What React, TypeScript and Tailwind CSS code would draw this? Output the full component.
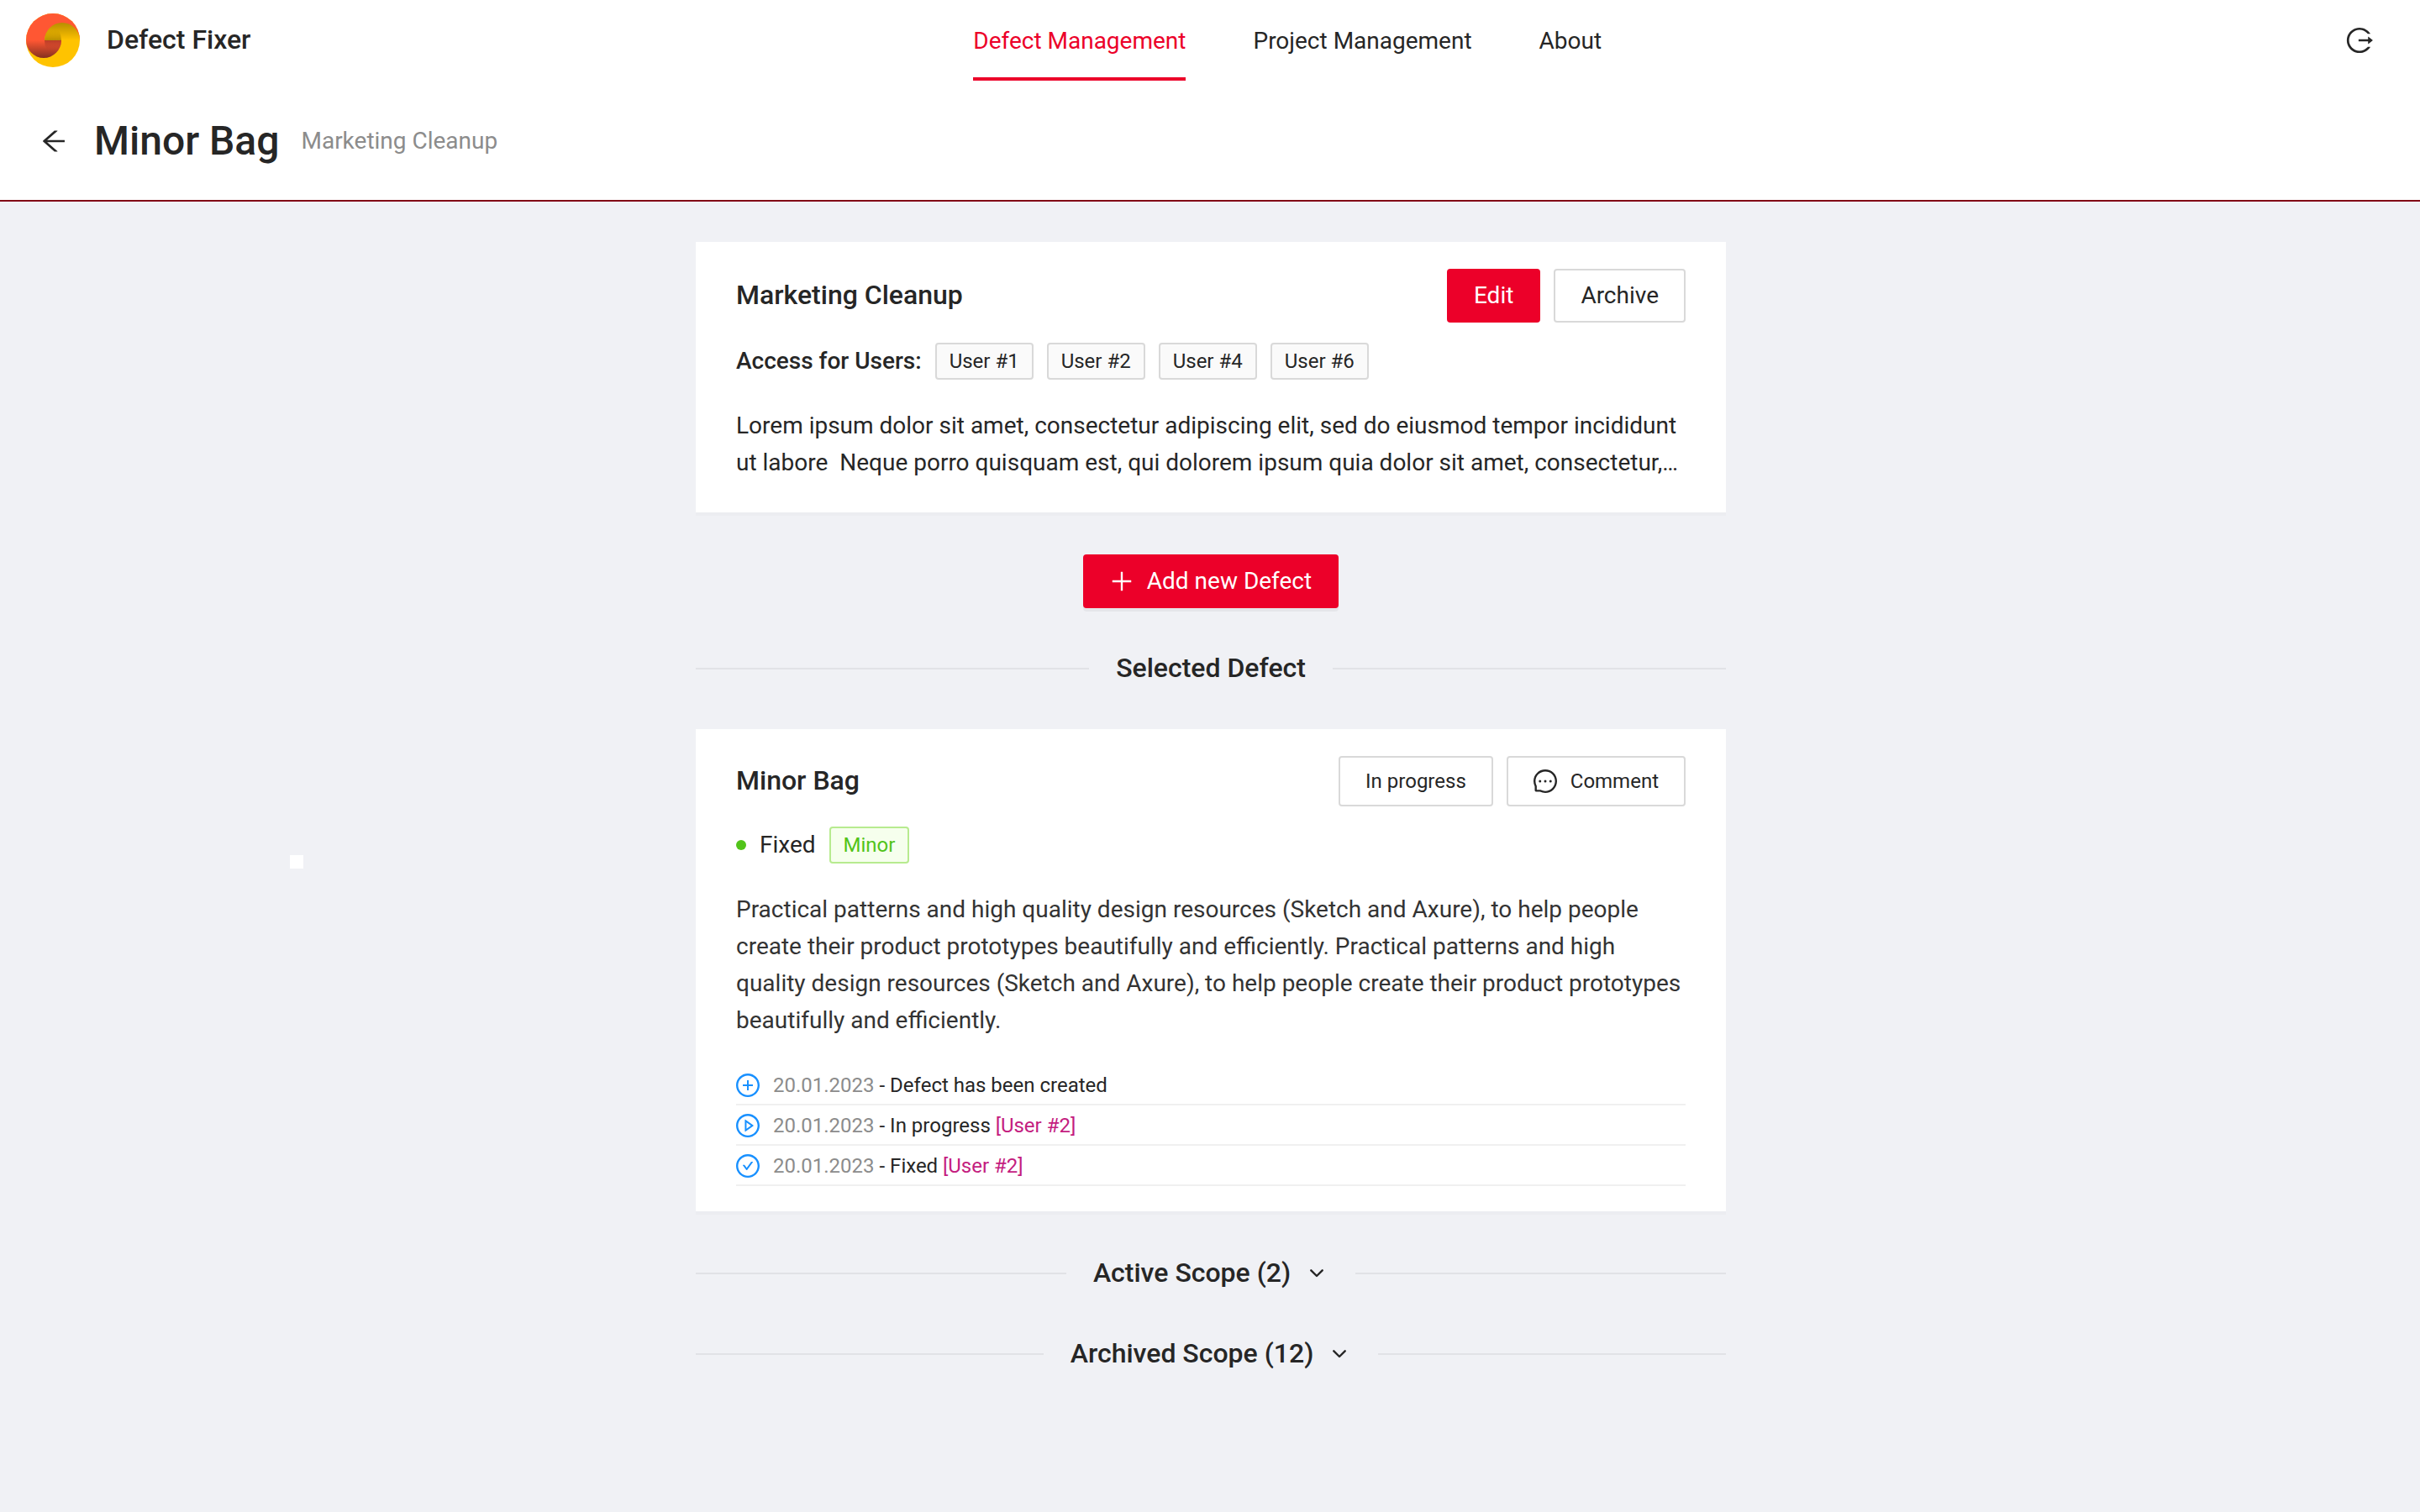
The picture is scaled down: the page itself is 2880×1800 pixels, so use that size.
import React from "react";
import {
  AiOutlineArrowLeft,
  AiOutlineCheckCircle,
  AiOutlineLogout,
  AiOutlineMessage,
  AiOutlinePlayCircle,
  AiOutlinePlus,
  AiOutlinePlusCircle,
} from "react-icons/ai";

const users = ["User #1", "User #2", "User #4", "User #6"];

const history = [
  { Icon: AiOutlinePlusCircle, date: "20.01.2023", text: "Defect has been created", user: "" },
  { Icon: AiOutlinePlayCircle, date: "20.01.2023", text: "In progress", user: "[User #2]" },
  { Icon: AiOutlineCheckCircle, date: "20.01.2023", text: "Fixed", user: "[User #2]" },
];

function Logo() {
  return (
    <svg viewBox="0 0 64 64" className="size-16 shrink-0" aria-hidden="true">
      <defs>
        <linearGradient id="gold" gradientUnits="userSpaceOnUse" x1="0" y1="11" x2="0" y2="32">
          <stop offset="0" stopColor="#b88d00" />
          <stop offset="1" stopColor="#ffc300" />
        </linearGradient>
        <linearGradient id="rust" gradientUnits="userSpaceOnUse" x1="0" y1="32" x2="0" y2="53">
          <stop offset="0" stopColor="#ff5733" />
          <stop offset="1" stopColor="#85301f" />
        </linearGradient>
        <linearGradient id="goldLens" gradientUnits="userSpaceOnUse" x1="0" y1="20" x2="0" y2="32">
          <stop offset="0" stopColor="#b88d00" stopOpacity="0" />
          <stop offset="1" stopColor="#b88d00" />
        </linearGradient>
        <linearGradient id="rustLens" gradientUnits="userSpaceOnUse" x1="0" y1="32" x2="0" y2="43">
          <stop offset="0" stopColor="#b83e28" />
          <stop offset="1" stopColor="#b83e28" stopOpacity="0" />
        </linearGradient>
      </defs>
      <circle cx="32" cy="32" r="32" fill="#ffc300" />
      <path d="M0 32a32 32 0 0 1 64 0z" fill="#ff5733" />
      <path d="M22 32a21 21 0 0 1 42 0z" fill="url(#gold)" />
      <path d="M0 32a21 21 0 0 0 42 0z" fill="url(#rust)" />
      <path d="M22 32A21 21 0 0 1 32 14.100A21 21 0 0 1 42 32z" fill="url(#goldLens)" />
      <path d="M42 32H22A21 21 0 0 0 32 49.900A21 21 0 0 0 42 32z" fill="url(#rustLens)" />
    </svg>
  );
}

function Divider({ children }: { children: React.ReactNode }) {
  return (
    <div className="flex items-center gap-8">
      <div className="h-0.5 flex-1 bg-black/6" />
      {children}
      <div className="h-0.5 flex-1 bg-black/6" />
    </div>
  );
}

function Scope({ label }: { label: string }) {
  return (
    <Divider>
      <button type="button" className="flex items-center gap-[23px] pr-1.5 text-[32px]/[46px] font-medium">
        <span className="pb-0.5">{label}</span>
        <svg
          viewBox="0 0 16 10"
          className="h-2.5 w-4"
          fill="none"
          stroke="currentColor"
          strokeWidth="2.4"
          strokeLinecap="round"
          strokeLinejoin="round"
          aria-hidden="true"
        >
          <path d="M1.300 1.300L8 8L14.700 1.300" />
        </svg>
      </button>
    </Divider>
  );
}

export default function App() {
  return (
    <div className="min-h-screen bg-[#f0f1f5] font-['Roboto',sans-serif] text-[28px]/11 text-[#262626]">
      <header className="border-b-2 border-[#820014] bg-white">
        <div className="flex h-24 items-center pl-[31px] pr-[54px]">
          <Logo />
          <span className="ml-8 pb-0.5 text-[32px]/[46px] font-medium">Defect Fixer</span>
          <nav className="flex h-full flex-1 justify-center gap-20">
            <a href="#defects" className="flex h-full items-center border-b-4 border-[#ec0029] pt-1.5 text-[#ec0029]">
              Defect Management
            </a>
            <a href="#projects" className="flex h-full items-center pt-0.5">
              Project Management
            </a>
            <a href="#about" className="flex h-full items-center pt-0.5">
              About
            </a>
          </nav>
          <button type="button" aria-label="Log out" className="ml-6">
            <AiOutlineLogout className="size-9" />
          </button>
        </div>
        <div className="flex h-[142px] items-center px-[46px] pt-0.5">
          <button type="button" aria-label="Back">
            <AiOutlineArrowLeft className="size-9" />
          </button>
          <h1 className="ml-[30px] text-5xl/16 font-medium">Minor Bag</h1>
          <span className="ml-[26px] text-[#8c8c8c]">Marketing Cleanup</span>
        </div>
      </header>

      <main className="mx-auto flex w-full max-w-[1228px] flex-col pt-12 pl-0.5">
        <section className="bg-white px-12 pt-8 pb-[37px] shadow-[0_4px_0_rgba(0,0,0,0.016)]">
          <div className="flex items-center gap-4">
            <h2 className="flex-1 pb-0.5 text-[32px]/[46px] font-medium">Marketing Cleanup</h2>
            <button type="button" className="h-16 rounded bg-[#ec0029] px-8 text-white">
              Edit
            </button>
            <button type="button" className="h-16 rounded border-2 border-[#d9d9d9] px-[30px]">
              Archive
            </button>
          </div>
          <div className="mt-6 flex items-center gap-4">
            <span className="font-medium">Access for Users:</span>
            {users.map((user) => (
              <span key={user} className="rounded border-2 border-[#d9d9d9] bg-[#fafafa] px-[15px] text-2xl/10">
                {user}
              </span>
            ))}
          </div>
          <p className="mt-[33px] whitespace-pre-wrap">
            Lorem ipsum dolor sit amet, consectetur adipiscing elit, sed do eiusmod tempor incididunt ut labore{"  "}
            Neque porro quisquam est, qui dolorem ipsum quia dolor sit amet, consectetur,…
          </p>
        </section>

        <button
          type="button"
          className="mt-[50px] flex h-16 items-center gap-3.5 self-center rounded bg-[#ec0029] pr-8 pl-[30px] text-white shadow-[0_4px_0_rgba(0,0,0,0.043)]"
        >
          <AiOutlinePlus className="size-8" />
          Add new Defect
        </button>

        <div className="mt-12">
          <Divider>
            <h2 className="pb-0.5 text-[32px]/[46px] font-medium">Selected Defect</h2>
          </Divider>
        </div>

        <section className="mt-12 bg-white px-12 pt-8 pb-[30px] shadow-[0_4px_0_rgba(0,0,0,0.016)]">
          <div className="flex items-center gap-4">
            <h2 className="flex-1 pb-0.5 text-[32px]/[46px] font-medium">Minor Bag</h2>
            <button type="button" className="h-15 rounded border-2 border-[#d9d9d9] px-[30px] text-2xl">
              In progress
            </button>
            <button
              type="button"
              className="flex h-15 items-center gap-3.5 rounded border-2 border-[#d9d9d9] pr-[30px] pl-7 text-2xl"
            >
              <AiOutlineMessage className="size-8" />
              Comment
            </button>
          </div>
          <div className="mt-6 flex items-center gap-4">
            <span className="size-3 rounded-full bg-[#52c41a]" />
            <span>Fixed</span>
            <span className="rounded border-2 border-[#b7eb8f] bg-[#f6ffed] px-[15px] text-2xl/10 text-[#52c41a]">
              Minor
            </span>
          </div>
          <p className="mt-[33px] text-[#333333]">
            Practical patterns and high quality design resources (Sketch and Axure), to help people create their product
            prototypes beautifully and efficiently. Practical patterns and high quality design resources (Sketch and
            Axure), to help people create their product prototypes beautifully and efficiently.
          </p>
          <ul className="mt-[31px]">
            {history.map(({ Icon, date, text, user }) => (
              <li key={text} className="flex h-12 items-center border-b-2 border-[#f0f0f0] pt-0.5 text-2xl">
                <Icon className="mr-3.5 -ml-0.5 size-8 text-[#1890ff]" />
                <span className="whitespace-pre">
                  <span className="text-[#8c8c8c]">{date}</span> - {text} <span className="text-[#c41d7f]">{user}</span>
                </span>
              </li>
            ))}
          </ul>
        </section>

        <div className="mt-[50px] flex flex-col gap-12">
          <Scope label="Active Scope (2)" />
          <Scope label="Archived Scope (12)" />
        </div>
      </main>

      <div className="absolute top-[1018px] left-[345px] size-4 bg-white" />
    </div>
  );
}
